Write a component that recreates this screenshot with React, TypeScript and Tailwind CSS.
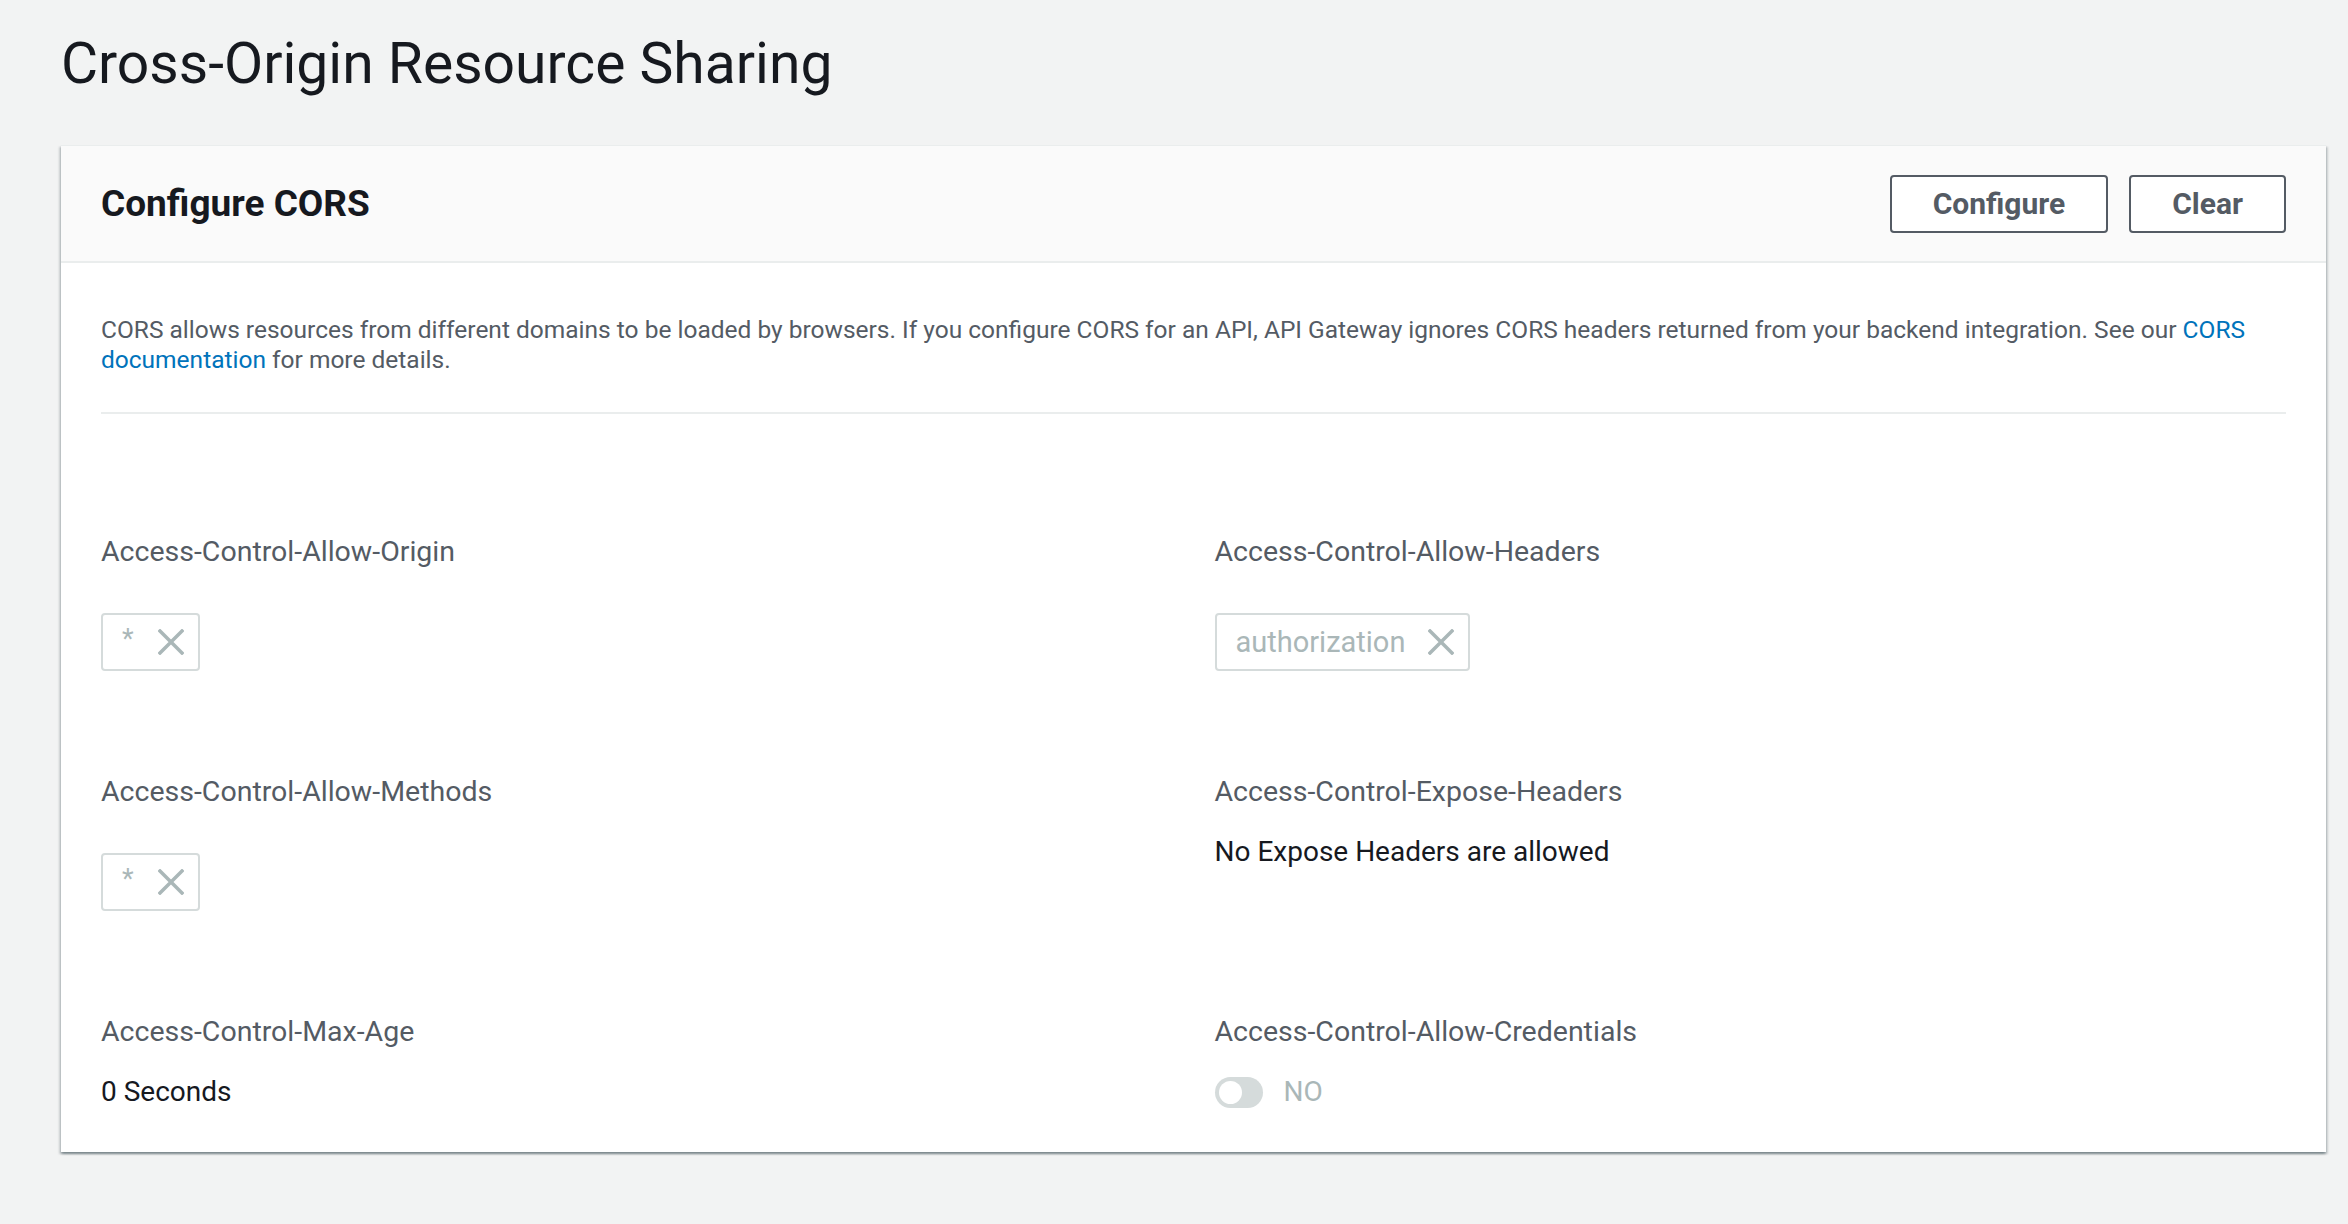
import React from "react";

const font = { fontFamily: "Roboto, 'Liberation Sans', sans-serif" };

function XIcon() {
  return (
    <svg width="26" height="26" viewBox="0 0 26 26" className="shrink-0">
      <path d="M2 2 L24 24 M24 2 L2 24" stroke="#aab7b8" strokeWidth="3.5" strokeLinecap="square" fill="none" />
    </svg>
  );
}

function Chip({ text, star }: { text: string; star?: boolean }) {
  return (
    <div className="mt-[43px] inline-flex h-[58px] items-center rounded-[4px] border-2 border-[#d5dbdb] pr-[14px] pl-[19px]">
      <span
        className={
          star
            ? "mr-[24px] -mt-[5px] text-[27px] leading-none text-[#aab7b8]"
            : "mr-[23px] text-[29px] leading-none text-[#aab7b8]"
        }
      >
        {text}
      </span>
      <XIcon />
    </div>
  );
}

function Label({ children }: { children: React.ReactNode }) {
  return <div className="h-[36px] text-[28.5px] leading-[36px] text-[#545b64]">{children}</div>;
}

function Value({ children }: { children: React.ReactNode }) {
  return <div className="mt-[24px] h-[36px] text-[28px] leading-[36px] text-[#16191f]">{children}</div>;
}

export default function App() {
  return (
    <main className="min-h-screen bg-[#f2f3f3] pt-[30px] pr-[22px] pl-[61px] pb-[40px]" style={font}>
      <h1 className="h-[68px] text-[57px] leading-[68px] font-normal text-[#16191f]">
        Cross-Origin Resource Sharing
      </h1>

      <section className="mt-[47px] bg-white shadow-[0_2px_2px_0_rgba(0,28,36,0.3),2px_2px_2px_0_rgba(0,28,36,0.15),-2px_2px_2px_0_rgba(0,28,36,0.15)]">
        <header className="flex h-[118px] items-center justify-between border-t border-b-2 border-t-[#eaeded] border-b-[#eaeded] bg-[#fafafa] px-[40px]">
          <h2 className="text-[37px] font-bold text-[#16191f]">Configure CORS</h2>
          <div className="flex gap-[21px]">
            <button className="h-[58px] rounded-[4px] border-2 border-[#545b64] bg-white px-[41px] text-[30px] font-bold text-[#545b64]">
              Configure
            </button>
            <button className="h-[58px] rounded-[4px] border-2 border-[#545b64] bg-white px-[41px] text-[30px] font-bold text-[#545b64]">
              Clear
            </button>
          </div>
        </header>

        <div className="px-[40px] pt-[52px] pb-[42px]">
          <p className="text-[24.5px] leading-[30px] text-[#545b64]">
            CORS allows resources from different domains to be loaded by browsers. If you configure CORS for an API,
            API Gateway ignores CORS headers returned from your backend integration. See our{" "}
            <a className="text-[#0073bb]" href="#">
              CORS
            </a>{" "}
            <a className="text-[#0073bb]" href="#">
              documentation
            </a>{" "}
            for more details.
          </p>

          <hr className="mt-[37px] border-t-2 border-[#eaeded]" />

          <div className="mt-[120px] grid grid-cols-2 gap-x-[42px] gap-y-[103px]">
            <div>
              <Label>Access-Control-Allow-Origin</Label>
              <Chip text="*" star />
            </div>
            <div>
              <Label>Access-Control-Allow-Headers</Label>
              <Chip text="authorization" />
            </div>
            <div>
              <Label>Access-Control-Allow-Methods</Label>
              <Chip text="*" star />
            </div>
            <div>
              <Label>Access-Control-Expose-Headers</Label>
              <Value>No Expose Headers are allowed</Value>
            </div>
            <div>
              <Label>Access-Control-Max-Age</Label>
              <Value>0 Seconds</Value>
            </div>
            <div>
              <Label>Access-Control-Allow-Credentials</Label>
              <div className="mt-[24px] flex h-[36px] items-center gap-[21px]">
                <div className="flex h-[31px] w-[48px] items-center rounded-full bg-[#d5dbdb] px-[4px]">
                  <div className="h-[23px] w-[23px] rounded-full bg-white" />
                </div>
                <span className="text-[28px] leading-[36px] text-[#aab7b8]">NO</span>
              </div>
            </div>
          </div>
        </div>
      </section>
    </main>
  );
}
